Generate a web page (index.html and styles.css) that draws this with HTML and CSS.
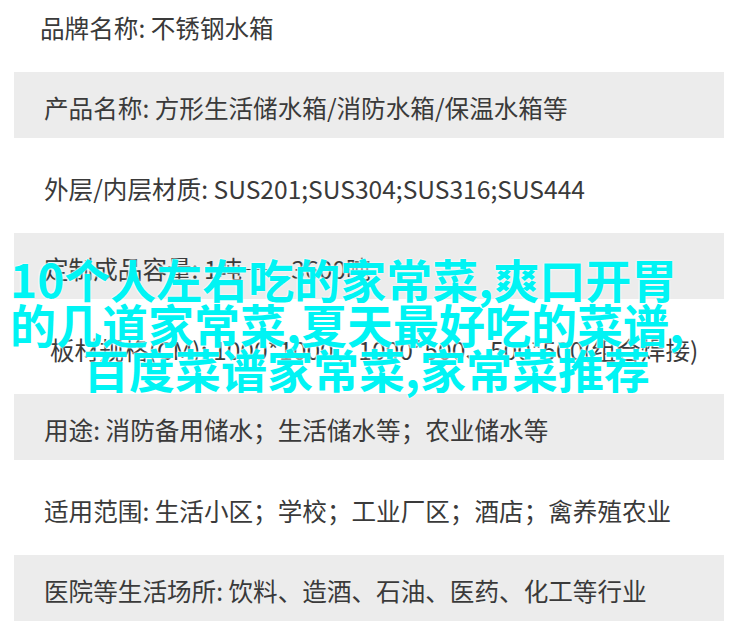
FILE: index.html
```html
<!DOCTYPE html>
<html lang="zh-CN">
<head>
    <meta charset="UTF-8">
    <meta name="viewport" content="width=device-width, initial-scale=1.0">
    <title>不锈钢水箱</title>
    <link rel="stylesheet" href="styles.css">
</head>
<body>
    <!-- 产品参数表 -->
    <div class="spec-list">
        <div class="row row-first">品牌名称: 不锈钢水箱</div>
        <div class="row grey">产品名称: 方形生活储水箱/消防水箱/保温水箱等</div>
        <div class="row">外层/内层材质: SUS201;SUS304;SUS316;SUS444</div>
        <div class="row grey">定制成品容量: 1吨——3600吨</div>
        <div class="row row-indent">板材规格(CM): 1000*1000、1000*500、500*500(组合焊接)</div>
        <div class="row grey">用途: 消防备用储水；生活储水等；农业储水等</div>
        <div class="row">适用范围: 生活小区；学校；工业厂区；酒店；禽养殖农业</div>
        <div class="row grey">医院等生活场所: 饮料、造酒、石油、医药、化工等行业</div>
    </div>

    <!-- 标题水印 -->
    <div class="overlay-title">
        <span class="line">10个人左右吃的家常菜,爽口开胃</span>
        <span class="line">的几道家常菜,夏天最好吃的菜谱,</span>
        <span class="line line-last">百度菜谱家常菜,家常菜推荐</span>
    </div>
</body>
</html>
```

FILE: styles.css
```css
/* 基本设置 */
html, body {
    overflow: hidden;
}

body {
    margin: 0;
    background: #fff;
    font-family: "Noto Sans CJK SC", "Noto Sans", sans-serif;
    color: #3a3a3a;
    height: 638px;
    position: relative;
}

/* 参数表 */
.spec-list {
    margin: 0 26px 0 14px;
}

.row {
    height: 95px;
    box-sizing: border-box;
    display: flex;
    align-items: center;
    padding: 4px 0 0 30px;
    font-size: 24.6px;
    white-space: nowrap;
}

.row-first {
    height: 94px;
    margin-top: -22px;
    padding-left: 26px;
}

.row-indent {
    padding-left: 36px;
}

.row.grey {
    height: 66px;
    background: #ececec;
}

/* 青色标题 */
.overlay-title {
    position: absolute;
    top: 256px;
    left: 10px;
    font-size: 46px;
    line-height: 45px;
    font-weight: 700;
    color: #00f4f4;
    text-shadow: 0 0 2px #fff, 0 0 2px #fff;
    white-space: nowrap;
}

.line {
    display: block;
}

.line-last {
    padding-left: 73px;
}
```
